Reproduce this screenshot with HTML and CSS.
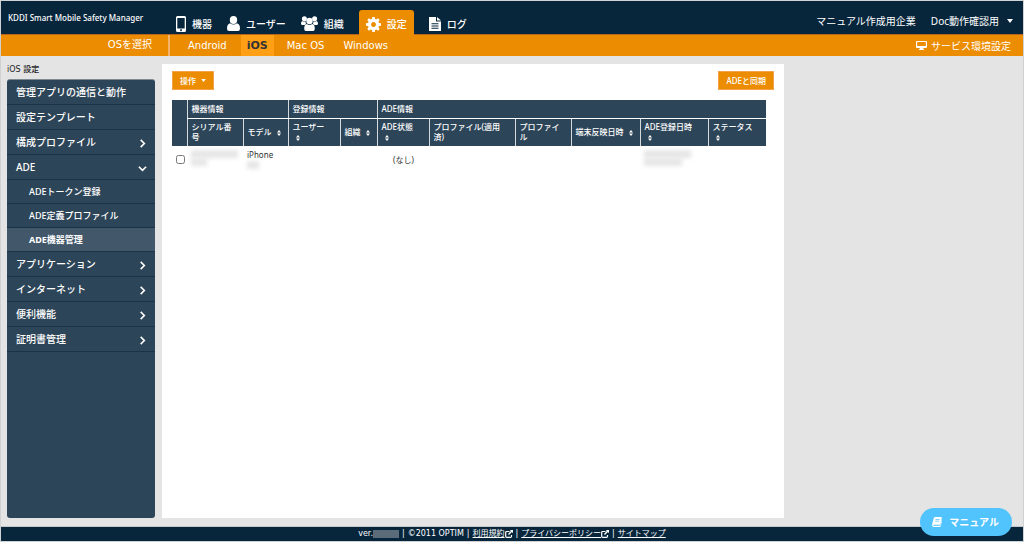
FILE: index.html
```html
<!DOCTYPE html>
<html lang="ja">
<head>
<meta charset="utf-8">
<meta name="viewport" content="width=device-width, initial-scale=1">
<title>KDDI Smart Mobile Safety Manager</title>
<link rel="stylesheet" href="styles.css">
</head>
<body>
<svg class="defs" aria-hidden="true">
  <symbol id="sort" viewBox="0 0 4 6"><path d="M0 2.500 2 0l2 2.500zM0 3.500h4L2 6z"/></symbol>
  <symbol id="right" viewBox="0 0 10 10"><path d="M3 1l4 4-4 4" fill="none" stroke="currentColor" stroke-width="1.800"/></symbol>
  <symbol id="down" viewBox="0 0 10 10"><path d="M1 3l4 4 4-4" fill="none" stroke="currentColor" stroke-width="1.800"/></symbol>
  <symbol id="caret" viewBox="0 0 6 4"><path d="M0 0h6L3 4z"/></symbol>
  <symbol id="external" viewBox="0 0 8 8"><path d="M4.500 1.500H1.800Q.7 1.500.7 2.600v3.600q0 1.100 1.100 1.100h3.600q1.100 0 1.100-1.100V5" fill="none" stroke="currentColor" stroke-width="1.200"/><path d="M4.800 0H8v3.200L6.900 2.100 4 5 3 4l2.900-2.900z"/></symbol>
</svg>
<header class="header">
  <div class="brand">KDDI Smart Mobile Safety Manager</div>
  <nav class="nav" aria-label="メイン">
    <a class="nav-item" href="#"><svg width="10" height="16" viewBox="0 0 10 16"><path fill-rule="evenodd" d="M1.500 0h7Q10 0 10 1.500v13Q10 16 8.500 16h-7Q0 16 0 14.500v-13Q0 0 1.500 0zM1.300 2v10.500h7.400V2zM5 13.300a.9.9 0 1 0 .01 0z"/></svg>機器</a>
    <a class="nav-item" href="#"><svg width="13" height="15" viewBox="0 0 13 15"><ellipse cx="6.500" cy="4" rx="3.700" ry="4"/><path d="M3 7.200Q0 8 0 12.500 0 15 2 15h9q2 0 2-2.500 0-4.500-3-5.300Q6.500 10 3 7.200z"/></svg>ユーザー</a>
    <a class="nav-item" href="#"><svg width="17" height="15" viewBox="0 0 17 15"><circle cx="3.400" cy="2.700" r="2.500"/><circle cx="13.600" cy="2.700" r="2.500"/><circle cx="8.500" cy="5" r="3.200"/><path d="M1.200 5Q0 5.600 0 7.500 0 9 1.300 9h2.300q1-.9 1.500-1.200Q4.300 6.500 4.600 5.300 3 6 1.200 5zM15.800 5Q17 5.600 17 7.500 17 9 15.700 9h-2.300q-1-.9-1.500-1.200.8-1.300.5-2.500 1.600.7 3.400-.3zM5.800 8Q3.200 8.400 3.200 12.700 3.200 15 5 15h7q1.800 0 1.800-2.300 0-4.300-2.600-4.700Q8.500 10 5.800 8z"/></svg>組織</a>
    <a class="nav-item nav-item-active" href="#" aria-current="page"><svg width="15" height="15" viewBox="0 0 16 16"><path fill-rule="evenodd" d="M6.700 0h2.600l.4 2.200 1.200.5 1.900-1.300 1.800 1.800-1.300 1.900.5 1.200 2.200.4v2.600l-2.200.4-.5 1.200 1.300 1.900-1.800 1.800-1.900-1.300-1.200.5L9.300 16H6.700l-.4-2.200-1.200-.5-1.900 1.300-1.800-1.800 1.300-1.900-.5-1.200L0 9.300V6.700l2.200-.4.5-1.200-1.300-1.900 1.800-1.800 1.900 1.300 1.200-.5zM8 5.400a2.600 2.600 0 1 0 .01 0z"/></svg>設定</a>
    <a class="nav-item" href="#"><svg width="12" height="14" viewBox="0 0 12 14"><path fill-rule="evenodd" d="M0 0h7v4.500h5V14H0zM2.500 6.200v1h7v-1zM2.500 8.500v1h7v-1zM2.500 10.800v1h7v-1z"/><path d="M8 0l4 3.600H8z"/></svg>ログ</a>
  </nav>
  <div class="account">
    <span>マニュアル作成用企業</span>
    <button class="account-menu" type="button">Doc動作確認用<svg width="6" height="4"><use href="#caret"/></svg></button>
  </div>
</header>
<div class="subnav">
  <div class="subnav-title">OSを選択</div>
  <nav class="os-list" aria-label="OS">
    <a class="os" href="#">Android</a>
    <a class="os os-active" href="#" aria-current="page">iOS</a>
    <a class="os" href="#">Mac OS</a>
    <a class="os" href="#">Windows</a>
  </nav>
  <a class="service" href="#"><svg width="11" height="9" viewBox="0 0 11 9"><path fill-rule="evenodd" d="M1 0h9q1 0 1 1v5q0 1-1 1H7l.5 1H8v1H3V8h.500L4 7H1Q0 7 0 6V1Q0 0 1 0zM1.200 1.100v3.900h8.600V1.100z"/></svg>サービス環境設定</a>
</div>
<div class="layout">
  <aside class="side">
    <h1 class="side-title">iOS 設定</h1>
    <nav class="menu" aria-label="iOS 設定">
      <a class="menu-item" href="#">管理アプリの通信と動作</a>
      <a class="menu-item" href="#">設定テンプレート</a>
      <a class="menu-item" href="#">構成プロファイル<svg width="9" height="9"><use href="#right"/></svg></a>
      <a class="menu-item" href="#">ADE<svg width="9" height="9"><use href="#down"/></svg></a>
      <a class="menu-sub" href="#">ADEトークン登録</a>
      <a class="menu-sub" href="#">ADE定義プロファイル</a>
      <a class="menu-sub menu-sub-active" href="#" aria-current="page">ADE機器管理</a>
      <a class="menu-item" href="#">アプリケーション<svg width="9" height="9"><use href="#right"/></svg></a>
      <a class="menu-item" href="#">インターネット<svg width="9" height="9"><use href="#right"/></svg></a>
      <a class="menu-item" href="#">便利機能<svg width="9" height="9"><use href="#right"/></svg></a>
      <a class="menu-item" href="#">証明書管理<svg width="9" height="9"><use href="#right"/></svg></a>
    </nav>
  </aside>
  <main class="panel">
    <div class="toolbar">
      <button class="btn" type="button">操作<svg width="5" height="3" viewBox="0 0 6 4"><path d="M0 0h6L3 4z"/></svg></button>
      <button class="btn" type="button">ADEと同期</button>
    </div>
    <table class="table">
      <colgroup><col class="c-check"><col class="c-serial"><col class="c-model"><col class="c-user"><col class="c-org"><col class="c-state"><col class="c-applied"><col class="c-profile"><col class="c-device"><col class="c-date"><col class="c-status"></colgroup>
      <thead>
        <tr class="groups"><td rowspan="2"></td><th colspan="2" scope="colgroup">機器情報</th><th colspan="2" scope="colgroup">登録情報</th><th colspan="6" scope="colgroup">ADE情報</th></tr>
        <tr class="columns">
          <th scope="col">シリアル番号</th>
          <th class="inline" scope="col">モデル <svg class="sort"><use href="#sort"/></svg></th>
          <th scope="col">ユーザー<br><svg class="sort"><use href="#sort"/></svg></th>
          <th class="inline" scope="col">組織 <svg class="sort"><use href="#sort"/></svg></th>
          <th scope="col">ADE状態<br><svg class="sort"><use href="#sort"/></svg></th>
          <th scope="col">プロファイル(適用済)</th>
          <th scope="col">プロファイル</th>
          <th class="inline" scope="col">端末反映日時 <svg class="sort"><use href="#sort"/></svg></th>
          <th scope="col">ADE登録日時<br><svg class="sort"><use href="#sort"/></svg></th>
          <th scope="col">ステータス<br><svg class="sort"><use href="#sort"/></svg></th>
        </tr>
      </thead>
      <tbody>
        <tr>
          <td class="check"><input type="checkbox" aria-label="機器を選択"></td>
          <td><span class="mask mask-long"></span><span class="mask mask-short"></span></td>
          <td>iPhone<span class="mask mask-tiny"></span></td>
          <td></td><td></td>
          <td class="none">(なし)</td>
          <td></td><td></td><td></td>
          <td><span class="mask mask-long"></span><span class="mask mask-mid"></span></td>
          <td></td>
        </tr>
      </tbody>
    </table>
  </main>
</div>
<footer class="footer">
  <span class="version">ver.<span class="version-mask"></span></span><span>|</span><span>©2011 OPTIM</span><span>|</span>
  <a href="#">利用規約<svg width="8" height="8"><use href="#external"/></svg></a><span>|</span>
  <a href="#">プライバシーポリシー<svg width="8" height="8"><use href="#external"/></svg></a><span>|</span>
  <a href="#">サイトマップ</a>
</footer>
<button class="manual" type="button"><svg width="10" height="10" viewBox="0 0 10 10"><path fill-rule="evenodd" d="M3.200 0H9q1 0 .8 1L8.500 7q-.2.700-1 .7H2q-.8 0-.8.600 0 .5.700.5h5.700q.7 0 .9-.7L9.700 3q.4.500.2 1.200L8.800 8.900Q8.500 10 7.500 10H2Q0 10 0 8.300q0-.5.200-1.200L1.700 1.200Q2 0 3.200 0zM3.700 2l-.2.800h4L7.700 2zM3.300 3.700l-.2.800h4l.2-.8z"/></svg>マニュアル</button>
</body>
</html>
```

FILE: styles.css
```css
* { box-sizing: border-box; }

body {
  margin: 0;
  min-height: 100vh;
  display: flex;
  flex-direction: column;
  border: 1px solid #cfd1d2;
  background: #e4e4e4;
  color: #fff;
  font-family: "DejaVu Sans", "Noto Sans CJK JP", sans-serif;
  font-size: 10px;
  line-height: 12px;
}

a { color: inherit; text-decoration: none; }
button { font: inherit; color: inherit; border: 0; cursor: pointer; }
svg { flex: none; fill: currentColor; }
.defs { position: absolute; width: 0; height: 0; }

.header {
  display: flex;
  height: 34px;
  padding: 0 10px 0 7px;
  background: #07263c;
  border-bottom: 1px solid #b8651c;
  font-family: "Noto Sans", "Noto Sans CJK JP", sans-serif;
}
.brand { flex: 0 0 168px; padding-top: 11px; font-size: 8px; font-weight: 500; white-space: nowrap; }
.nav { display: flex; gap: 15px; align-items: flex-end; font-weight: 500; }
.nav-item { display: flex; align-items: center; gap: 6px; height: 24px; padding-top: 3px; white-space: nowrap; }
.nav-item-active { padding: 3px 7px 0; margin-bottom: -1px; height: 25px; background: #ec8c00; border-radius: 3px 3px 0 0; }
.account { display: flex; align-items: center; gap: 15px; margin-left: auto; padding-top: 7px; white-space: nowrap; }
.account-menu { display: flex; align-items: center; gap: 8px; padding: 0; background: none; }

.subnav { display: flex; align-items: stretch; height: 21px; padding-right: 12px; background: #ec8c00; }
.subnav-title { flex: 0 0 169px; padding: 4px 16px 0 0; border-right: 2px solid #f4b469; text-align: right; }
.os-list { display: flex; align-items: stretch; padding-left: 6px; }
.os { display: flex; align-items: center; margin: 0 6px; padding: 0 6px; }
.os + .os { margin-left: 1px; }
.os:nth-child(2) { margin-left: 2px; }
.os-active { background: #ff9f16; color: #333; font-size: 11px; font-weight: bold; }
.service { display: flex; align-items: center; gap: 4px; margin-left: auto; font-family: "Noto Sans CJK JP", sans-serif; }

.layout {
  flex: 1;
  display: grid;
  grid-template-columns: 148px minmax(0, 1fr) 232px;
  gap: 7px;
  padding: 8px 0 8px 6px;
  border-bottom: 1px solid #c4c7c9;
}
.side { display: flex; flex-direction: column; }
.side-title { margin: 0; padding-bottom: 3px; color: #222; font-size: 8px; font-weight: 500; line-height: 12px; }
.menu {
  flex: 1;
  background: #2d4558;
  border-radius: 3px;
  border-top: 1px solid #7e8991;
  font-family: "Noto Sans", "Noto Sans CJK JP", sans-serif;
  font-weight: 500;
}
.menu-item, .menu-sub { display: flex; align-items: center; border-bottom: 1px solid #193348; }
.menu-item { justify-content: space-between; min-height: 25px; padding: 0 8px 0 9px; }
.menu-item svg { margin-top: 3px; }
.menu-sub { min-height: 24px; padding-left: 22px; font-size: 9px; }
.menu-sub-active { background: #42586a; font-weight: bold; }

.panel { background: #fff; color: #333; padding: 7px 10px; }
.toolbar { display: flex; justify-content: space-between; margin-bottom: 10px; }
.btn {
  display: flex;
  align-items: center;
  gap: 5px;
  height: 19px;
  padding: 0 7px;
  background: #ec8c00;
  border: 1px solid #f3a34a;
  color: #fff;
  font-family: "Noto Sans", "Noto Sans CJK JP", sans-serif;
  font-size: 8px;
  font-weight: 500;
}

.table {
  width: calc(100% - 8px);
  table-layout: fixed;
  border-collapse: collapse;
  font-family: "Noto Sans", "Noto Sans CJK JP", sans-serif;
  font-size: 8px;
  line-height: 10px;
}
.table th, .table td { text-align: left; padding: 0 3px 0 4px; }
.table thead { background: #2d4558; color: #fff; }
.table th { font-weight: 500; border-left: 1px solid #d5dade; }
.groups th { height: 18px; border-bottom: 1px solid #fff; }
.columns th { height: 28px; padding-right: 8px; }
.columns .inline { padding-right: 3px; white-space: nowrap; }
.table tbody td { height: 27px; vertical-align: top; padding-top: 4px; }
.table tbody .none { vertical-align: middle; text-align: center; padding-top: 0; }
.table tbody .check { padding: 9px 0 0 4px; }
.check input { display: block; width: 9px; height: 9px; margin: 0; }
.sort { width: 4px; height: 6px; margin-left: 3px; vertical-align: -1px; }
.c-check { width: 15px; }
.c-serial { width: 56px; }
.c-model { width: 45px; }
.c-user { width: 52px; }
.c-org { width: 37px; }
.c-state { width: 52px; }
.c-applied { width: 86px; }
.c-profile { width: 56px; }
.c-device { width: 69px; }
.c-date { width: 68px; }

.mask { display: block; height: 8px; background: #e6e6e6; filter: blur(2px); }
.mask-long { width: 47px; }
.mask-mid { width: 38px; }
.mask-short { width: 16px; }
.mask-tiny { width: 12px; margin-top: 1px; }

.footer {
  display: flex;
  justify-content: center;
  gap: 3px;
  height: 14px;
  background: #07263c;
  font-size: 8px;
  line-height: 14px;
  white-space: nowrap;
}
.footer a { text-decoration: underline; }
.footer svg { vertical-align: -2px; }
.version { display: flex; align-items: center; }
.version-mask { width: 26px; height: 8px; background: #5b6b7a; }

.manual {
  position: fixed;
  right: 12px;
  bottom: 6px;
  display: flex;
  align-items: center;
  gap: 7px;
  height: 28px;
  padding: 0 13px 0 12px;
  border-radius: 14px;
  background: #51c3fd;
  font-family: "Noto Sans CJK JP", sans-serif;
  font-weight: bold;
}
```
